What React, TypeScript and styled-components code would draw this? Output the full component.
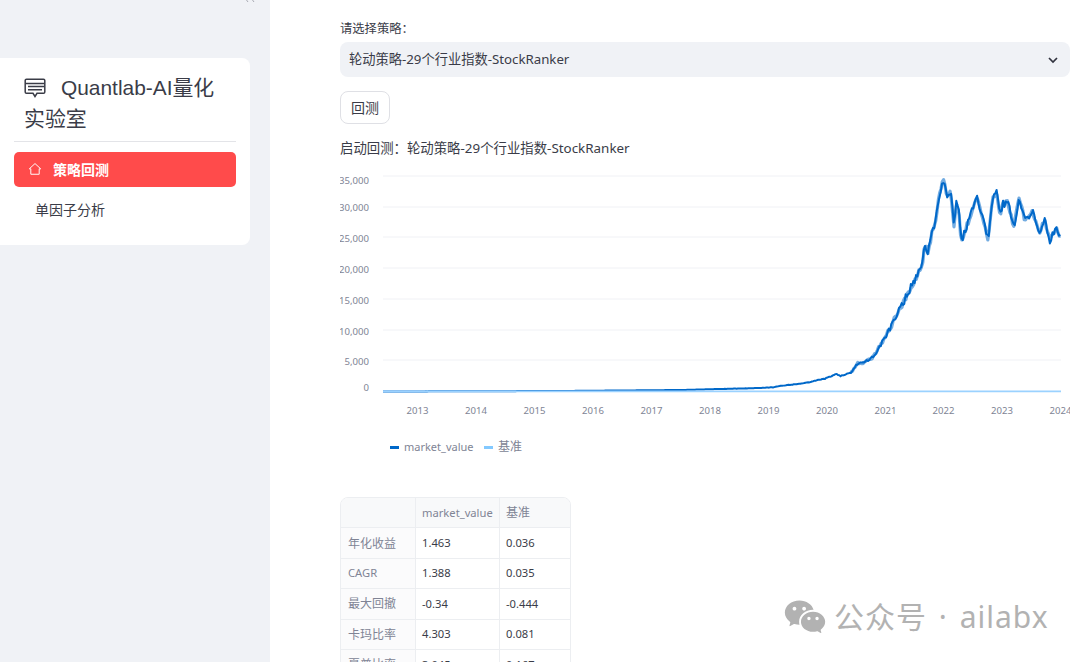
import React from 'react';
import styled, { createGlobalStyle } from 'styled-components';
import { RiWechatFill } from 'react-icons/ri';

const SANS = `"Noto Sans", "Noto Sans CJK SC", sans-serif`;
const FULL_COLON = '\uFF1A';
const INK = '#3a3c48';

const Global = createGlobalStyle`
  html, body { margin: 0; padding: 0; height: 100%; overflow: hidden; background: #fff; }
  #root { height: 100%; }
  * { box-sizing: border-box; }
`;

const Page = styled.div`
  position: relative;
  display: flex;
  width: 1080px;
  height: 662px;
  overflow: hidden;
  font-family: ${SANS};
  color: ${INK};
`;

const Sidebar = styled.aside`
  position: relative;
  flex: 0 0 270px;
  height: 100%;
  padding: 58px 20px 0 0;
  background: #f0f2f6;
`;

const CollapseMark = styled.svg`
  position: absolute;
  top: -8px;
  left: 243px;
  width: 14px;
  height: 10px;
`;

const MenuCard = styled.nav`
  height: 187px;
  padding: 14px 14px 0;
  background: #fff;
  border-radius: 0 8px 8px 0;
`;

const BrandTitle = styled.div`
  padding: 0 10px 7px;
  border-bottom: 1px solid #e3e4e8;
  font-family: "Liberation Sans", "Noto Sans CJK SC", sans-serif;
  font-size: 20.9px;
  line-height: 31px;
  color: ${INK};
  height: 70px;
  svg { width: 22px; height: 20px; margin-right: 15px; vertical-align: -3px; }
`;

const MenuItem = styled.div<{ $active?: boolean }>`
  display: flex;
  align-items: center;
  height: 35px;
  margin-top: ${p => (p.$active ? '10px' : '6px')};
  padding-left: ${p => (p.$active ? '14px' : '21px')};
  padding-bottom: ${p => (p.$active ? '2px' : '3px')};
  border-radius: 5px;
  background: ${p => (p.$active ? '#ff4b4b' : 'transparent')};
  color: ${p => (p.$active ? '#fff' : INK)};
  font-size: 14px;
  font-weight: ${p => (p.$active ? 700 : 400)};
  svg { width: 14px; height: 14px; margin-right: 11px; }
`;

const Main = styled.main`
  flex: 1;
  padding: 21px 10px 0 70px;
  min-width: 0;
`;

const FieldLabel = styled.div`
  font-size: 12.3px;
  line-height: 16px;
  height: 21px;
`;

const SelectBox = styled.div`
  display: flex;
  align-items: center;
  justify-content: space-between;
  height: 35px;
  padding: 0 11px 2px 9px;
  background: #f0f2f6;
  border-radius: 8px;
  font-size: 13.25px;
  svg { margin-top: 2px; }
`;

const RunButton = styled.button`
  display: block;
  width: 50px;
  height: 33px;
  margin-top: 14px;
  padding: 0 0 2px;
  background: #fff;
  border: 1px solid #dfe0e5;
  border-radius: 8px;
  color: ${INK};
  font: 400 14px ${SANS};
`;

const StatusText = styled.div`
  margin-top: 14px;
  font-size: 13.4px;
  line-height: 20px;
`;

const ChartSvg = styled.svg`
  display: block;
  width: 730px;
  height: 292px;
  margin-top: 13px;
  text { font-family: ${SANS}; fill: #808495; }
`;

const StatsTable = styled.table`
  margin-top: 34px;
  border-collapse: separate;
  border-spacing: 0;
  width: 231px;
  font-size: 11.2px;
  table-layout: fixed;
  border: 1px solid #eceef1;
  border-radius: 8px;
  overflow: hidden;
  td, th {
    height: 30.4px;
    padding: 0 6px 1px;
    font-weight: 400;
    text-align: left;
    border-right: 1px solid #eceef1;
    border-bottom: 1px solid #eceef1;
    white-space: nowrap;
  }
  th:last-child, td:last-child { border-right: 0; }
  thead th { background: #f8f9fa; color: #808495; }
  td { color: ${INK}; }
`;

const RowHead = styled.th<{ $latin?: boolean }>`
  background: #fbfbfc;
  color: #808495;
  && { padding-left: 7px; }
  font-size: ${p => (p.$latin ? '11.2px' : '12px')};
`;

const CjkHead = styled.span`
  font-size: 12px;
`;

const Watermark = styled.div`
  position: absolute;
  left: 783px;
  top: 595px;
  display: flex;
  align-items: center;
  color: #b2b2b2;
  font-family: "Noto Sans", "Noto Sans CJK SC", sans-serif;
  font-size: 30px;
  line-height: 44px;
  letter-spacing: 1px;
  word-spacing: 3px;
  white-space: nowrap;
  svg { width: 44px; height: 44px; margin-right: 7px; flex: none; }
`;

/* ---------- chart data ---------- */
const OX = 340; // svg origin in page coords
const OY = 171;

const anchors: [number, number][] = [
  [383, 391.5], [560, 391], [680, 390], [760, 388], [773, 387.3], [783, 385.5], [803, 383.5],
  [827, 378], [837, 374], [840, 376], [852, 372], [858, 363], [862, 363.5], [873, 357],
  [880, 346], [888, 332], [900, 309], [908, 293], [913, 283], [922, 265], [925, 245], [928, 252],
  [932, 233], [935, 227], [938, 202], [941, 190], [943, 180], [947, 195], [951, 193], [954, 228],
  [956, 203], [959, 212], [961, 242], [967, 225], [972, 211], [977, 197], [982, 216], [988, 240],
  [993, 197], [997, 192], [1000, 215], [1003, 204], [1008, 203], [1014, 227], [1019, 198],
  [1025, 220], [1033, 212], [1039, 233], [1045, 220], [1050, 242], [1053, 232], [1057, 228], [1061, 237],
];

function buildLine(fromX: number, salt: number, gain: number): string {
  let s = salt;
  const rnd = () => {
    s = (s * 48271) % 2147483647;
    return s / 2147483647 - 0.5;
  };
  for (let i = 0; i < 8; i++) rnd();
  const pts: string[] = [];
  let a = 0;
  for (let x = fromX; x <= 1061; x += 1.3) {
    while (a < anchors.length - 2 && x > anchors[a + 1][0]) a++;
    const [x0, y0] = anchors[a];
    const [x1, y1] = anchors[a + 1];
    const y = y0 + ((y1 - y0) * (x - x0)) / (x1 - x0);
    const amp = Math.min(gain, (391 - y) * 0.08);
    pts.push(`${(x - OX).toFixed(2)},${(y + rnd() * amp - OY).toFixed(2)}`);
  }
  return pts.join(' ');
}

const gridYs = [176, 207, 237, 268, 299, 330, 360];
const yLabels: [string, number][] = [
  ['35,000', 184], ['30,000', 211], ['25,000', 242], ['20,000', 273],
  ['15,000', 304], ['10,000', 335], ['5,000', 365], ['0', 391],
];
const years: [string, number][] = [
  ['2013', 417.5], ['2014', 476], ['2015', 534.5], ['2016', 593], ['2017', 651.5],
  ['2018', 710], ['2019', 768.5], ['2020', 827], ['2021', 885.5], ['2022', 943.5],
  ['2023', 1002], ['2024', 1060.5],
];

const rows: [string, string, string, boolean?][] = [
  ['年化收益', '1.463', '0.036'],
  ['CAGR', '1.388', '0.035', true],
  ['最大回撤', '-0.34', '-0.444'],
  ['卡玛比率', '4.303', '0.081'],
  ['夏普比率', '3.045', '0.167'],
];

const App: React.FC = () => (
  <Page>
    <Global />
    <Sidebar>
      <CollapseMark viewBox="0 0 14 10" fill="none" stroke="#a8aab3" strokeWidth="1">
        <path d="M5 2 2 6l3 4M11 2 8 6l3 4" />
      </CollapseMark>
      <MenuCard>
        <BrandTitle>
          <svg viewBox="0 0 22 20" fill="none" stroke="#3a3c47" strokeWidth="1.5">
            <path d="M2.5 1.2h17a1.3 1.3 0 0 1 1.3 1.3v11.5a1.3 1.3 0 0 1-1.3 1.3h-6.5L11 18.5l-2-3.2H2.5A1.3 1.3 0 0 1 1.2 14V2.5a1.3 1.3 0 0 1 1.3-1.3Z" />
            <path d="M1.5 5.5h19M4 8.5h16M4 11.8h14" />
          </svg>
          Quantlab-AI量化实验室
        </BrandTitle>
        <MenuItem $active>
          <svg viewBox="0 0 16 16" fill="none" stroke="#fff" strokeWidth="1.1" strokeLinejoin="round">
            <path d="M8 1.8 14.5 7.8H12.8V14H3.2V7.8H1.5Z" />
          </svg>
          策略回测
        </MenuItem>
        <MenuItem>单因子分析</MenuItem>
      </MenuCard>
    </Sidebar>
    <Main>
      <FieldLabel>请选择策略{FULL_COLON}</FieldLabel>
      <SelectBox>
        轮动策略-29个行业指数-StockRanker
        <svg width="12" height="12" viewBox="0 0 12 12" fill="none" stroke="#31333f" strokeWidth="1.7">
          <path d="M2 4l4 4 4-4" />
        </svg>
      </SelectBox>
      <RunButton>回测</RunButton>
      <StatusText>启动回测{FULL_COLON}轮动策略-29个行业指数-StockRanker</StatusText>
      <ChartSvg viewBox="0 0 730 292">
        {gridYs.map(y => (
          <line key={y} x1={383 - OX} x2={1061 - OX} y1={y - OY} y2={y - OY} stroke="#f0f1f5" strokeWidth="1" />
        ))}
        {yLabels.map(([t, y]) => (
          <text key={t} x={369 - OX} y={y - OY} fontSize="9.6" textAnchor="end">{t}</text>
        ))}
        {years.map(([t, x]) => (
          <text key={t} x={x - OX} y={414 - OY} fontSize="9.6" textAnchor="middle">{t}</text>
        ))}
        <polyline points={buildLine(850, 1301, 6)} fill="none" stroke="#0068c9" strokeWidth="3.2" strokeOpacity="0.55" strokeLinejoin="round" />
        <polyline points={buildLine(383, 731, 7)} fill="none" stroke="#0068c9" strokeWidth="2" strokeLinejoin="round" />
        <line x1={383 - OX} x2={1061 - OX} y1={391.3 - OY} y2={391.3 - OY} stroke="#9bd2ff" strokeWidth="1.8" />
        <rect x={390 - OX} y={446 - OY} width="9" height="3" fill="#0068c9" />
        <text x={404 - OX} y={451 - OY} fontSize="11">market_value</text>
        <rect x={484 - OX} y={446 - OY} width="9" height="3" fill="#83c9ff" />
        <text x={498 - OX} y={451 - OY} fontSize="12">基准</text>
      </ChartSvg>
      <StatsTable>
        <colgroup>
          <col style={{ width: 75 }} />
          <col style={{ width: 84 }} />
          <col />
        </colgroup>
        <thead>
          <tr><th /><th>market_value</th><th><CjkHead>基准</CjkHead></th></tr>
        </thead>
        <tbody>
          {rows.map(([k, a, b, latin]) => (
            <tr key={k}><RowHead $latin={latin}>{k}</RowHead><td>{a}</td><td>{b}</td></tr>
          ))}
        </tbody>
      </StatsTable>
    </Main>
    <Watermark>
      <RiWechatFill />
      公众号 · ailabx
    </Watermark>
  </Page>
);

export default App;
